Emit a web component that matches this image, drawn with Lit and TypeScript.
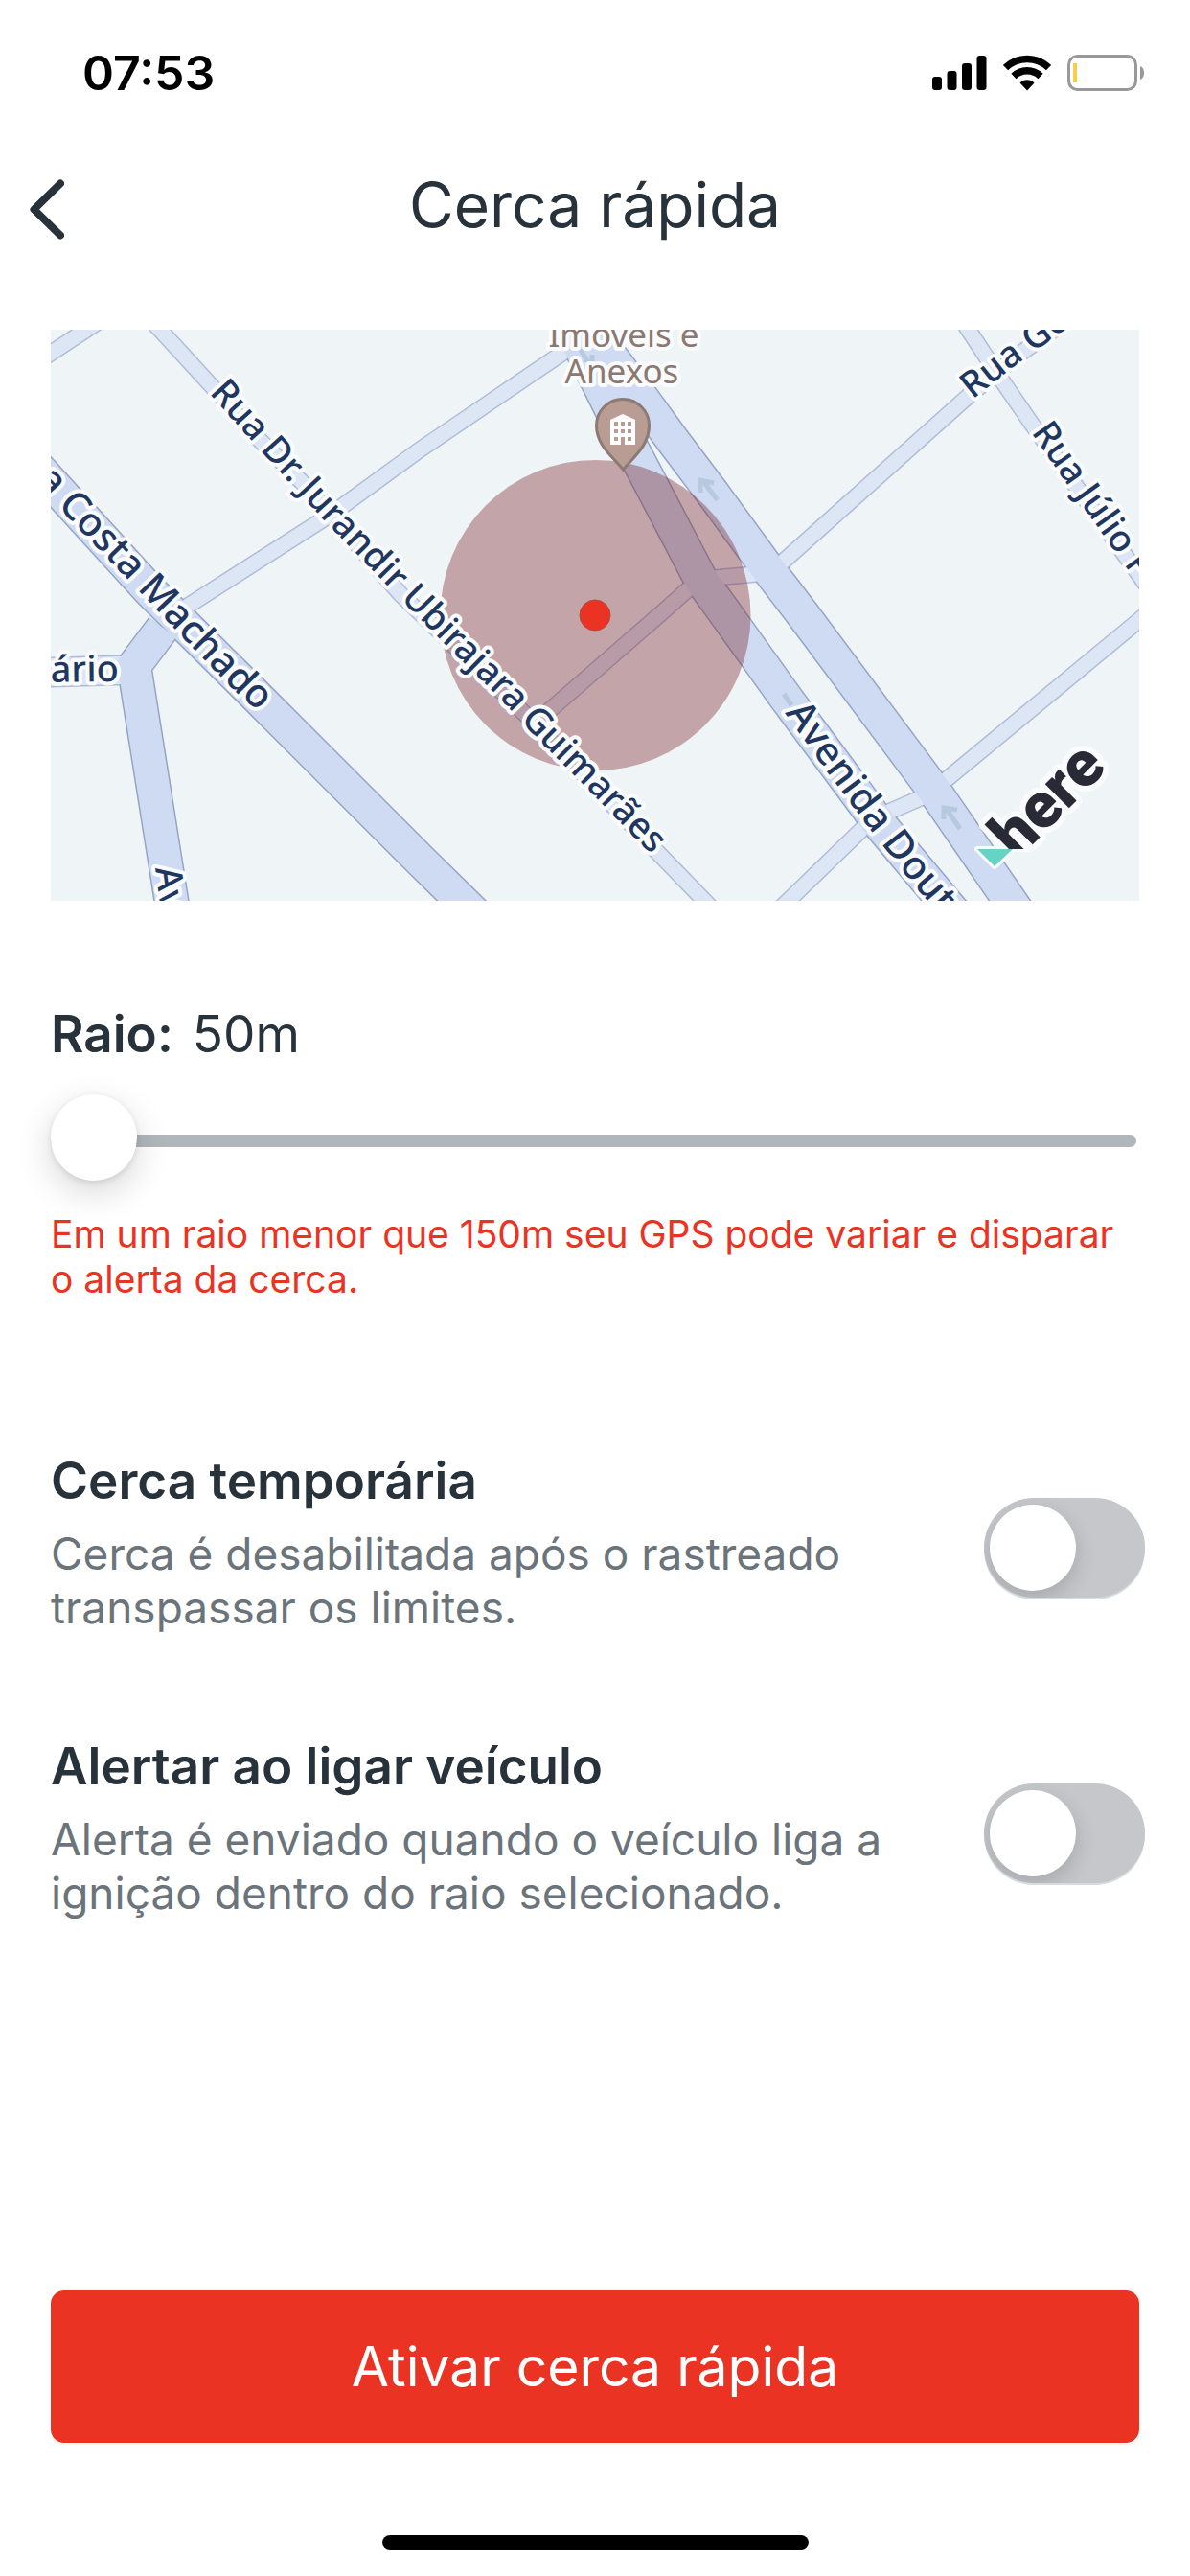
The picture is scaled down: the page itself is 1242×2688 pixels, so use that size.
import { LitElement, html, svg, css } from "lit";
import { customElement, property, state } from "lit/decorators.js";

const minorRoads = [
  "M40 377 L110 331",
  "M155 331 L222 404 L267 455 L317 505 L418 620 L551 748 L685 888 L748 953",
  "M190 636 L345 537 L440 468 L592 365",
  "M735 600 L690 640 L560 753",
  "M735 604 L800 598",
  "M805 597 L1011 413 L1062 371 L1115 333",
  "M805 957 L900 865 L928 847 L965 831 L987 814 L1200 638",
  "M1002 331 L1045 396 L1078 444 L1196 610",
];

const majorRoads = [
  "M33 481 L157 617 L260 719 L440 899 L495 953",
  "M170 655 L140 695 L181 953",
  "M585 320 L642 435 L674 495 L731 604 L757 640 L820 728 L918 860 L996 953",
  "M598 320 L629 361 L661 403 L701 458 L744 515 L801 593 L837 640 L975 825 L1063 953",
];

interface StreetLabel {
  id: string;
  path: string;
  text: string;
  large?: boolean;
  end?: boolean;
}

const streetLabels: StreetLabel[] = [
  {
    id: "jurandir",
    path: "M218 410 L260 457 L340 545 L407 614 L465 673 L518 725 L557 767 L607 817 L678 890 L730 944",
    text: "Rua Dr. Jurandir Ubirajara Guimarães",
  },
  { id: "costa", path: "M12 474 L72 541 L145 617 L200 675 L243 719 L270 743", text: "a Costa Machado", large: true, end: true },
  { id: "avenida", path: "M819 744 L863 805 L910 868 L947 915 L1010 990", text: "Avenida Dout", large: true },
  { id: "rua-g", path: "M1015 417 L1060 381 L1135 327", text: "Rua Go" },
  { id: "julio", path: "M1076 451 L1110 500 L1176 593 L1220 655", text: "Rua Júlio F" },
  { id: "ario", path: "M30 712 L124 711", text: "ário", end: true },
  { id: "av", path: "M162 906 L172 980", text: "Av" },
];

@customElement("fence-map")
export class FenceMap extends LitElement {
  static styles = css`
    :host { display: block; }
    .map { display: block; width: 100%; height: auto; background: #eff4f7; }
    .road { fill: none; stroke-linejoin: miter; }
    .minor-edge { stroke: #b0bcd8; stroke-width: 18; }
    .minor-fill { stroke: #dde6f5; stroke-width: 15; }
    .wide-edge { stroke: #b0bcd8; stroke-width: 32; }
    .wide-fill { stroke: #dde6f5; stroke-width: 29; }
    .major-edge { stroke: #95a5c4; stroke-width: 37; }
    .major-fill { stroke: #cfdbf2; stroke-width: 34; }
    .arrow { fill: none; stroke: #b7c9e0; stroke-width: 5; }
    .street {
      font: 500 38px "Noto Sans", sans-serif;
      fill: #1f3760;
      stroke: #f9fbfd;
      stroke-width: 8;
      stroke-linejoin: round;
      paint-order: stroke;
    }
    .street.large { font-size: 41px; }
    .place {
      font: 400 35px "Noto Sans", sans-serif;
      fill: #8b7870;
      stroke: #f9fbfd;
      stroke-width: 8;
      stroke-linejoin: round;
      paint-order: stroke;
      text-anchor: middle;
    }
    .brand {
      font: 900 67px Roboto, "Liberation Sans", sans-serif;
      fill: #282a35;
    }
    .brand-halo { stroke: #f9fbfd; stroke-width: 12; stroke-linejoin: round; fill: #f9fbfd; }
  `;

  render() {
    return html`
      <svg class="map" viewBox="53 344 1136 596" role="img" aria-label="Mapa da cerca">
        <path class="road wide-edge" d="M40 702 L140 699" />
        ${minorRoads.map((d) => svg`<path class="road minor-edge" d=${d} />`)}
        ${majorRoads.map((d) => svg`<path class="road major-edge" d=${d} />`)}
        <path class="road wide-fill" d="M40 702 L140 699" />
        ${minorRoads.map((d) => svg`<path class="road minor-fill" d=${d} />`)}
        ${majorRoads.map((d) => svg`<path class="road major-fill" d=${d} />`)}

        <path class="arrow" d="M749 522 L733 501 M731 514 V501 L745 504" />
        <path class="arrow" d="M1002 865 L987 843 M985 855 V843 L999 845" />
        <path class="arrow" d="M604 362 L615 380 M618 370 V380" />
        <path class="arrow" d="M818 724 L826 736" />

        <circle cx="621.5" cy="642" r="162" fill="#781e24" fill-opacity="0.37" />

        <defs>${streetLabels.map((l) => svg`<path id=${l.id} d=${l.path} />`)}</defs>
        ${streetLabels.map(
          (l) => svg`<text class=${l.large ? "street large" : "street"} text-anchor=${l.end ? "end" : "start"}>
            <textPath href=${"#" + l.id} startOffset=${l.end ? "100%" : "0%"}>${l.text}</textPath></text>`,
        )}

        <text class="place" x="651" y="362">Imóveis e</text>
        <text class="place" x="649" y="400">Anexos</text>

        <path d="M650.500 490 C640 477 622.500 465 622.500 444 A27.500 27.500 0 0 1 677.500 444 C677.500 465 661 477 650.500 490 Z"
          fill="#b99d94" stroke="#8b7b75" stroke-width="3" />
        <path fill="#fff" fill-rule="evenodd"
          d="M637 438 L650 432 L663 438 V464 H652 V456 H648 V464 H637 Z
             M641 440 h4 v4 h-4 Z M648 440 h4 v4 h-4 Z M655 440 h4 v4 h-4 Z
             M641 448 h4 v4 h-4 Z M648 448 h4 v4 h-4 Z M655 448 h4 v4 h-4 Z
             M641 456 h4 v4 h-4 Z M655 456 h4 v4 h-4 Z" />

        <circle cx="621" cy="642" r="16" fill="#ea3323" stroke="#b5483f" stroke-width="1" />

        <clipPath id="brand-cut"><rect x="1000" y="760" width="189" height="126" /></clipPath>
        <clipPath id="halo-cut"><rect x="1000" y="760" width="189" height="129" /></clipPath>
        <g clip-path="url(#halo-cut)">
          <text class="brand brand-halo" transform="translate(1061 898) rotate(-45)">here</text>
        </g>
        <path d="M1020 886 H1057 L1038 904 Z" fill="#f9fbfd" stroke="#f9fbfd" stroke-width="6" stroke-linejoin="round" />
        <path d="M1020 886 H1057 L1038 904 Z" fill="#67d3c6" />
        <g clip-path="url(#brand-cut)" aria-hidden="true">
          <text class="brand" transform="translate(1061 898) rotate(-45)">here</text>
        </g>
      </svg>
    `;
  }
}

@customElement("setting-row")
export class SettingRow extends LitElement {
  static styles = css`
    :host { display: block; }
    .row { display: flex; align-items: flex-start; justify-content: space-between; gap: 24px; }
    .copy { flex: 1; display: grid; gap: 16px; max-width: 900px; }
    .name { font-size: 53px; line-height: 64px; font-weight: 600; color: #27323a; }
    .detail { margin: 0; font-size: 46px; line-height: 56px; color: #6b747b; }
    .switch {
      appearance: none;
      flex: none;
      box-sizing: border-box;
      width: 168px;
      height: 104px;
      margin: 50px -6px 0 0;
      padding: 7px 6px;
      border-radius: 52px;
      background: #c6c7cb;
      box-shadow: 0 2px 0 #d8dbde;
      overflow: hidden;
    }
    .switch::before {
      content: "";
      display: block;
      width: 90px;
      height: 90px;
      border-radius: 50%;
      background: #fff;
      box-shadow: 0 8px 22px rgba(0, 0, 0, 0.16);
    }
    .switch:checked { background: #ea3323; }
    .switch:checked::before { margin-left: auto; }
  `;

  @property() name = "";
  @property() detail = "";

  render() {
    return html`
      <div class="row">
        <div class="copy">
          <label class="name" for="toggle">${this.name}</label>
          <p class="detail" id="detail">${this.detail}</p>
        </div>
        <input class="switch" id="toggle" type="checkbox" role="switch" aria-describedby="detail" />
      </div>
    `;
  }
}

@customElement("app-root")
export class AppRoot extends LitElement {
  static styles = css`
    :host {
      display: block;
      font-family: Inter, "Liberation Sans", sans-serif;
      color: #27323a;
      background: #fff;
    }
    .screen { display: flex; flex-direction: column; min-height: 100vh; }
    .status {
      display: flex;
      align-items: center;
      justify-content: space-between;
      padding: 48px 47px 28px 86px;
      color: #000;
    }
    .time { font-size: 50px; line-height: 56px; font-weight: 600; }
    .indicators { display: flex; align-items: center; gap: 17px; }
    .indicators svg { display: block; }
    .header {
      display: grid;
      grid-template-columns: 106px 1fr 106px;
      align-items: center;
      min-height: 163px;
    }
    .back { display: block; padding: 0 0 0 31px; border: 0; background: none; color: inherit; }
    .back svg { display: block; }
    .title { margin: 0; text-align: center; font-size: 64px; line-height: 80px; font-weight: 400; }
    .content { flex: 1; display: flex; flex-direction: column; padding: 49px 53px 0; }
    .radius { display: flex; gap: 20px; margin-top: 107px; font-size: 53px; line-height: 64px; }
    .radius-label { font-weight: 600; }
    .slider {
      appearance: none;
      display: block;
      width: calc(100% - 3px);
      height: 96px;
      margin: 31px 0 0;
      background: none;
    }
    .slider::-webkit-slider-runnable-track { height: 13px; border-radius: 7px; background: #b0b6b9; }
    .slider::-webkit-slider-thumb {
      appearance: none;
      width: 90px;
      height: 90px;
      margin-top: -42px;
      border: 0;
      border-radius: 50%;
      background: #fff;
      box-shadow: 0 12px 36px rgba(0, 0, 0, 0.16), 0 2px 6px rgba(0, 0, 0, 0.1);
    }
    .warning { margin: 26px 0 0; font-size: 39px; line-height: 47px; color: #ea3323; }
    .settings { display: grid; gap: 106px; margin-top: 155px; }
    .submit {
      margin-top: auto;
      padding: 0;
      border: 0;
      border-radius: 14px;
      background: #ea3323;
      color: #fff;
      font: 400 57px/159px Inter, "Liberation Sans", sans-serif;
    }
    .home { display: flex; justify-content: center; padding: 96px 0 27px; }
    .home-bar { width: 445px; height: 16px; border-radius: 8px; background: #000; }
  `;

  @state() private radius = 50;

  render() {
    return html`
      <div class="screen">
        <div class="status">
          <span class="time">07:53</span>
          <div class="indicators">
            <svg width="57" height="38" viewBox="0 0 57 38" aria-hidden="true">
              <rect x="0" y="23" width="10" height="14" rx="3" />
              <rect x="15.500" y="17" width="10" height="20" rx="3" />
              <rect x="31" y="9" width="10" height="28" rx="3" />
              <rect x="46.500" y="1" width="10" height="36" rx="3" />
            </svg>
            <svg width="50" height="38" viewBox="0 0 50 38" aria-hidden="true">
              <g fill="none" stroke="#000" stroke-width="7.500">
                <path d="M2.500 13.500 A32.500 32.500 0 0 1 47.500 13.500" />
                <path d="M11 22.500 A20 20 0 0 1 39 22.500" />
              </g>
              <path d="M25 37.500 L17.500 29.500 A10.500 10.500 0 0 1 32.500 29.500 Z" />
            </svg>
            <svg width="81" height="38" viewBox="0 0 81 38" aria-hidden="true">
              <rect x="1.500" y="1.500" width="70" height="35" rx="9" fill="none" stroke="#999" stroke-width="3" />
              <rect x="6" y="9" width="4" height="20" fill="#f7ce46" />
              <path d="M76 12 C81.500 14 81.500 24 76 26 Z" fill="#999" />
            </svg>
          </div>
        </div>

        <header class="header">
          <button class="back" type="button" aria-label="Voltar">
            <svg width="36" height="72" viewBox="0 0 36 72" aria-hidden="true">
              <path d="M32 13.500 L4.500 40.500 L32 67.500" fill="none" stroke="#27323a" stroke-width="8"
                stroke-linecap="round" stroke-linejoin="round" />
            </svg>
          </button>
          <h1 class="title">Cerca rápida</h1>
        </header>

        <main class="content">
          <fence-map></fence-map>

          <div class="radius">
            <label class="radius-label" for="radius">Raio:</label>
            <output for="radius">${this.radius}m</output>
          </div>
          <input class="slider" id="radius" type="range" min="50" max="1000" step="10"
            .value=${String(this.radius)}
            @input=${(e: Event) => (this.radius = Number((e.target as HTMLInputElement).value))} />
          <p class="warning">Em um raio menor que 150m seu GPS pode variar e disparar o alerta da cerca.</p>

          <div class="settings">
            <setting-row name="Cerca temporária"
              detail="Cerca é desabilitada após o rastreado transpassar os limites."></setting-row>
            <setting-row name="Alertar ao ligar veículo"
              detail="Alerta é enviado quando o veículo liga a ignição dentro do raio selecionado."></setting-row>
          </div>

          <button class="submit" type="button">Ativar cerca rápida</button>
        </main>

        <div class="home"><div class="home-bar"></div></div>
      </div>
    `;
  }
}
